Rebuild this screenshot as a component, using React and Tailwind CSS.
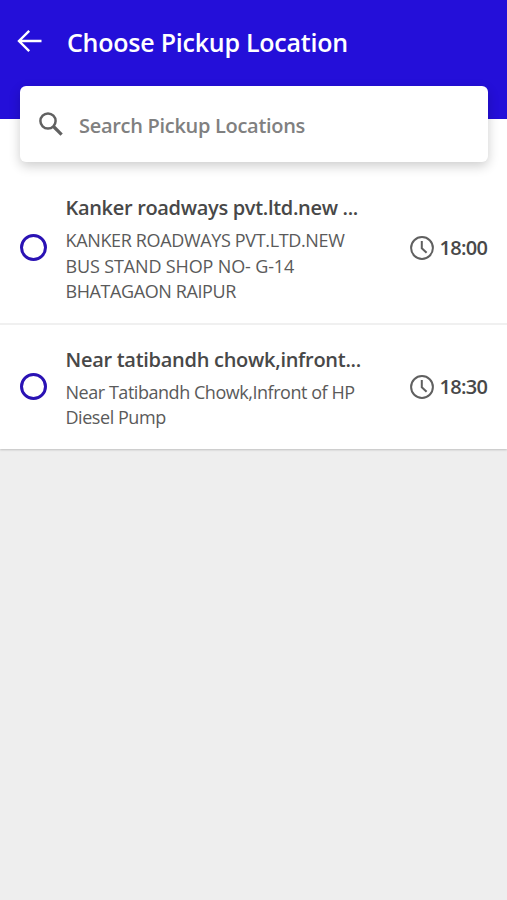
import React, { useState } from 'react'

// ── Data ─────────────────────────────────────────────────────────────────────

const LOCATIONS = [
  {
    id: 1,
    name: 'Kanker roadways pvt.ltd.new ...',
    nameClass: 'tracking-[-0.32px]',
    address: [
      { text: 'KANKER ROADWAYS PVT.LTD.NEW', className: 'tracking-[-0.35px]' },
      { text: 'BUS STAND SHOP NO- G-14', className: 'tracking-[-0.14px]' },
      { text: 'BHATAGAON RAIPUR', className: 'tracking-[-0.4px]' },
    ],
    time: '18:00',
  },
  {
    id: 2,
    name: 'Near tatibandh chowk,infront...',
    nameClass: 'tracking-[-0.28px]',
    address: [
      { text: 'Near Tatibandh Chowk,Infront of HP', className: 'tracking-[-0.46px]' },
      { text: 'Diesel Pump', className: 'tracking-[-0.45px]' },
    ],
    time: '18:30',
  },
]

// ── Icons ────────────────────────────────────────────────────────────────────

function BackIcon() {
  return (
    <svg width="26" height="24" viewBox="0 0 26 24" fill="none" stroke="currentColor" strokeWidth="2.4">
      <path d="M24.5 12H2M12.2 1.8L2 12L12.2 22.2" />
    </svg>
  )
}

function SearchIcon() {
  return (
    <svg width="24" height="24" viewBox="0 0 24 24" fill="none" stroke="currentColor">
      <circle cx="9" cy="9" r="7.6" strokeWidth="2.5" />
      <path d="M14.5 14.5L22.6 22.6" strokeWidth="3.2" />
    </svg>
  )
}

function ClockIcon() {
  return (
    <svg width="24" height="24" viewBox="0 0 24 24" fill="none" stroke="currentColor" strokeWidth="2">
      <circle cx="12" cy="12" r="10.9" />
      <path d="M11.8 5V12.2L16.6 16.8" />
    </svg>
  )
}

// ── Location row ─────────────────────────────────────────────────────────────

function LocationRow({ location, selected, onSelect }) {
  return (
    <li
      onClick={onSelect}
      className="flex items-center pl-5 pr-[19px] pt-[18px] pb-[18px] border-b-2 border-[#f0f0f0] last:border-b-0 cursor-pointer"
    >
      <span className="flex items-center justify-center w-[27px] h-[27px] rounded-full border-[3px] border-[#2a12b4] shrink-0">
        {selected && <span className="w-3 h-3 rounded-full bg-[#2a12b4]" />}
      </span>
      <div className="ml-[18.5px] flex-1 min-w-0 whitespace-nowrap">
        <h2 className={`pt-px text-[20px] leading-8 font-semibold text-[#484848] ${location.nameClass}`}>
          {location.name}
        </h2>
        <p className="mt-1 text-[18px] leading-[25.5px] text-[#5a5a5a]">
          {location.address.map(line => (
            <span key={line.text} className={`block ${line.className}`}>{line.text}</span>
          ))}
        </p>
      </div>
      <div className="flex items-center gap-[6px] text-[#606060]">
        <ClockIcon />
        <span className="w-[48.5px] whitespace-nowrap text-[20px] leading-6 font-semibold tracking-[-0.7px] text-[#484848]">
          {location.time}
        </span>
      </div>
    </li>
  )
}

// ── App ──────────────────────────────────────────────────────────────────────

export default function App() {
  const [selectedId, setSelectedId] = useState(null)
  const [query, setQuery] = useState('')

  const visible = LOCATIONS.filter(l => l.name.toLowerCase().includes(query.toLowerCase()))

  return (
    <div className="min-h-screen bg-[#eeeeee] font-['Open_Sans','Noto_Sans',sans-serif] overflow-hidden">
      {/* Header */}
      <header className="flex items-start h-[119px] pl-[17px] bg-[#240fd9] text-white">
        <button className="mt-[29px]" aria-label="Back">
          <BackIcon />
        </button>
        <h1 className="mt-[26px] ml-6 text-[25px] leading-8 font-semibold tracking-[-0.24px] whitespace-nowrap">
          Choose Pickup Location
        </h1>
      </header>

      <main className="bg-white shadow-[0_1px_2px_rgba(0,0,0,0.2)]">
        {/* Search box, pulled up over the header */}
        <div className="px-5 pr-[19px] h-[54px]">
          <label className="relative -top-[33px] flex items-center h-[76px] pl-[19px] rounded-[6px] bg-white text-[#616161] shadow-[0_4px_12px_rgba(0,0,0,0.2)]">
            <SearchIcon />
            <input
              type="text"
              value={query}
              onChange={e => setQuery(e.target.value)}
              placeholder="Search Pickup Locations"
              className="ml-4 pt-[3px] flex-1 min-w-0 text-[20px] font-semibold tracking-[-0.3px] text-[#484848] placeholder:text-[#808080] focus:outline-none"
            />
          </label>
        </div>

        <ul>
          {visible.map(location => (
            <LocationRow
              key={location.id}
              location={location}
              selected={location.id === selectedId}
              onSelect={() => setSelectedId(location.id)}
            />
          ))}
        </ul>
      </main>
    </div>
  )
}
